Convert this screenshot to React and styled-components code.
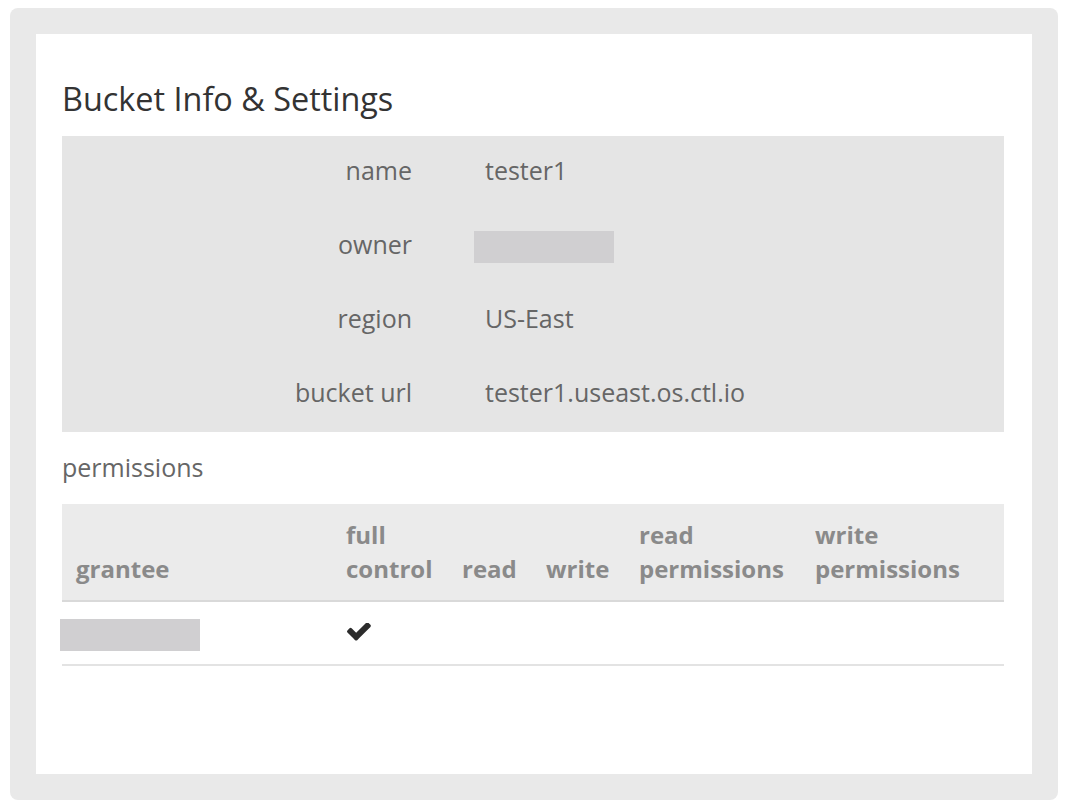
import React from "react";
import styled, { createGlobalStyle } from "styled-components";

const Global = createGlobalStyle`
  html, body { margin: 0; padding: 0; background: #ffffff; }
  body { font-family: "Open Sans", "Liberation Sans", sans-serif; }
`;

const Frame = styled.div`
  margin: 8px 10px 4px;
  padding: 26px;
  background: #e9e9e9;
  border-radius: 8px;
`;

const Panel = styled.div`
  background: #ffffff;
  min-height: 740px;
  box-sizing: border-box;
  padding: 44px 28px 20px 26px;
`;

const Title = styled.h1`
  margin: 0 0 18px;
  font-size: 32.4px;
  line-height: 40px;
  font-weight: 400;
  color: #333333;
`;

const InfoBox = styled.div`
  background: #e5e5e5;
  padding: 15px 0 21px;
  display: grid;
  grid-template-columns: 350px 1fr;
  column-gap: 62px;
  row-gap: 36px;
`;

const Label = styled.div`
  text-align: right;
  font-size: 25px;
  line-height: 38px;
  color: #666666;
`;

const Value = styled.div`
  font-size: 25px;
  line-height: 38px;
  color: #666666;
  padding-left: ${(p) => (p.$flush ? 0 : 11)}px;
  display: flex;
  align-items: center;
`;

const Redacted = styled.div`
  width: 140px;
  height: 32px;
  background: #d0cfd1;
  margin-left: ${(p) => p.$shift || 0}px;
  margin-top: ${(p) => p.$down || 0}px;
`;

const SubLabel = styled.div`
  font-size: 25px;
  line-height: 34px;
  color: #666666;
  margin: 18px 0 20px;
`;

const Table = styled.table`
  width: 100%;
  border-collapse: collapse;
  table-layout: fixed;
`;

const Th = styled.th`
  background: #ebebeb;
  border-bottom: 2px solid #d9d9d9;
  text-align: left;
  vertical-align: bottom;
  padding: 14px 0 14px 14px;
  font-size: 24px;
  line-height: 34px;
  font-weight: 700;
  color: #8a8a8a;
  white-space: nowrap;
`;

const Td = styled.td`
  height: 62px;
  padding: 0 0 0 ${(p) => (p.$flush ? 0 : 14)}px;
  border-bottom: 2px solid #e3e3e3;
  vertical-align: middle;
  color: #333333;
`;

const CheckSvg = styled.svg`
  display: block;
  width: 24px;
  height: 18px;
  margin-left: 1px;
  margin-top: -3px;
  fill: #2c2c2c;
`;

function Check() {
  return (
    <CheckSvg viewBox="120 400 1560 1130" aria-hidden="true">
      <path d="M1671 566q0 40-28 68l-724 724-136 136q-28 28-68 28t-68-28l-136-136-362-362q-28-28-28-68t28-68l136-136q28-28 68-28t68 28l294 295 656-657q28-28 68-28t68 28l136 136q28 28 28 68z" />
    </CheckSvg>
  );
}

const info = [
  { label: "name", value: "tester1" },
  { label: "owner", redacted: true },
  { label: "region", value: "US-East" },
  { label: "bucket url", value: "tester1.useast.os.ctl.io" },
];

const cols = [
  { w: 270, l1: "", l2: "grantee" },
  { w: 116, l1: "full", l2: "control" },
  { w: 84, l1: "", l2: "read" },
  { w: 93, l1: "", l2: "write" },
  { w: 176, l1: "read", l2: "permissions" },
  { w: 203, l1: "write", l2: "permissions" },
];

export default function App() {
  return (
    <>
      <Global />
      <Frame>
        <Panel>
          <Title>Bucket Info &amp; Settings</Title>
          <InfoBox>
            {info.map((r) => (
              <React.Fragment key={r.label}>
                <Label>{r.label}</Label>
                {r.redacted ? (
                  <Value $flush>
                    <Redacted $down={6} />
                  </Value>
                ) : (
                  <Value>{r.value}</Value>
                )}
              </React.Fragment>
            ))}
          </InfoBox>
          <SubLabel>permissions</SubLabel>
          <Table>
            <colgroup>
              {cols.map((c, i) => (
                <col key={i} style={{ width: c.w }} />
              ))}
            </colgroup>
            <thead>
              <tr>
                {cols.map((c, i) => (
                  <Th key={i}>
                    {c.l1 ? (
                      <>
                        {c.l1}
                        <br />
                      </>
                    ) : null}
                    {c.l2}
                  </Th>
                ))}
              </tr>
            </thead>
            <tbody>
              <tr>
                <Td $flush>
                  <Redacted $shift={-2} $down={4} />
                </Td>
                <Td>
                  <Check />
                </Td>
                <Td />
                <Td />
                <Td />
                <Td />
              </tr>
            </tbody>
          </Table>
        </Panel>
      </Frame>
    </>
  );
}
